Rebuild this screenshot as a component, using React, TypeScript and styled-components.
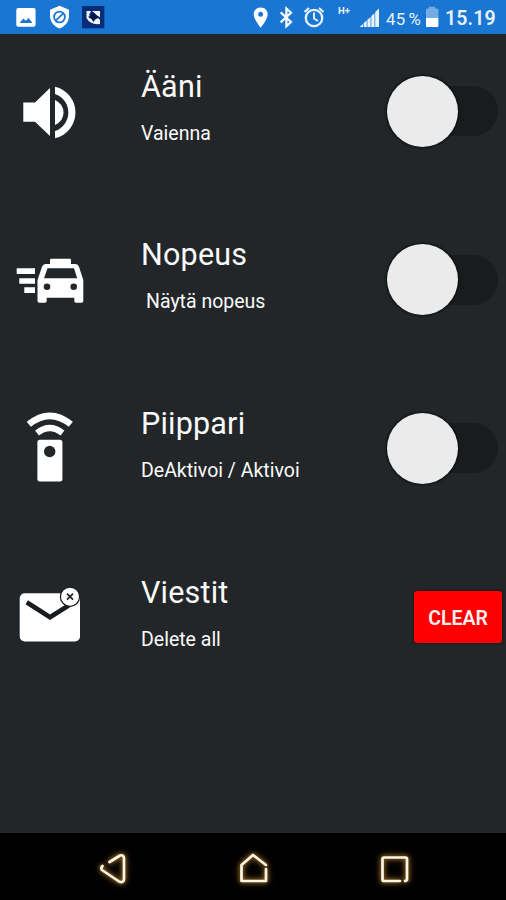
import React from "react";
import styled, { createGlobalStyle } from "styled-components";

const Global = createGlobalStyle`
  * { box-sizing: border-box; }
  html, body { margin: 0; background: #222628; }
  body { font-family: Roboto, "Noto Sans", sans-serif; color: #fafafa; }
  svg { display: block; flex: none; }
`;

const Screen = styled.div`
  width: 506px;
  height: 900px;
  display: flex;
  flex-direction: column;
  overflow: hidden;
  background: #222628;
`;

const StatusBar = styled.header`
  height: 34px;
  flex: none;
  display: flex;
  justify-content: space-between;
  background: #1976d2;
  color: #e8f2fc;
`;

const StatusGroup = styled.div`
  display: flex;
  align-items: center;
`;

const Percent = styled.span`
  width: 39px;
  padding-top: 3px;
  font-size: 16.8px;
  letter-spacing: 0.3px;
  white-space: nowrap;
  word-spacing: -1.5px;
`;

const Clock = styled.span`
  width: 61px;
  padding-top: 2px;
  font-size: 19.5px;
  font-weight: 600;
  letter-spacing: 0.15px;
`;

const Settings = styled.main`
  flex: 1;
  display: flex;
  flex-direction: column;
  gap: 14.7px;
`;

const Row = styled.section`
  height: 154px;
  display: grid;
  grid-template-columns: 141px 1fr auto;
  align-items: center;
`;

const Labels = styled.div<{ $indent?: number }>`
  display: flex;
  flex-direction: column;
  gap: 17px;
  padding-bottom: 8px;
  p { padding-left: ${(p) => p.$indent ?? 0}px; }
`;

const Title = styled.h2`
  margin: 0;
  font-size: 30.5px;
  line-height: 36px;
  font-weight: 400;
  letter-spacing: 0.2px;
`;

const Subtitle = styled.p`
  margin: 0;
  font-size: 19.5px;
  line-height: 24px;
  white-space: pre;
`;

const Switch = styled.button`
  width: 112px;
  height: 72px;
  margin-right: 7px;
  padding: 0;
  border: 0;
  display: flex;
  align-items: center;
  background: none;
`;

const Track = styled.span`
  width: 76px;
  height: 50px;
  margin-left: -36px;
  border-radius: 0 25px 25px 0;
  background: #1a1b1c;
`;

const Knob = styled.span`
  width: 71px;
  height: 71px;
  flex: none;
  z-index: 1;
  border-radius: 50%;
  background: #ebebeb;
  box-shadow: 0 0 2px 1px #0c0e0f;
`;

const ClearButton = styled.button`
  width: 88px;
  height: 52px;
  margin-right: 4px;
  padding: 3px 0 0;
  border: 0;
  border-radius: 3px;
  background: #fe0000;
  color: #fff0f0;
  font: 600 19.5px Roboto, sans-serif;
  box-shadow: 0 0 2px 1px #181c1e;
`;

const NavBar = styled.footer`
  height: 67px;
  flex: none;
  display: flex;
  justify-content: center;
  align-items: center;
  gap: 91px;
  padding: 3px 0 0 2px;
  background: #000;
  svg {
    filter: drop-shadow(0 0 2px #a87c38) drop-shadow(0 0 3px #5c3f12);
  }
`;

const SoundIcon = () => (
  <svg width="100" height="100" fill="#fff">
    <path d="M23.3 41.5H35L50 27V75L35 60.8H23.3Z" />
    <path d="M55 39Q63.5 43 63.5 51.5T55 64Z" />
    <path d="M55 25.7A26.5 26.5 0 0 1 55 77.3V70A19.5 19.5 0 0 0 55 33Z" />
  </svg>
);

const CarIcon = () => (
  <svg width="100" height="100" fill="#fff">
    <path d="M16.7 38.3H35V44H16.7ZM19.3 48.2H35V53.7H19.3ZM24.3 57.3H35V63H24.3Z" />
    <path
      fillRule="evenodd"
      d="M50 34V30Q50 28.8 51.2 28.8H69.8Q71 28.8 71 30V34H75.5Q78 34 79 36.8L83.3 50V71Q83.3 72.7 81.6 72.7H76Q74.3 72.7 74.3 71V67.7H46.7V71Q46.7 72.7 45 72.7H39.2Q37.5 72.7 37.5 71V50L42 36.8Q43 34 45.5 34ZM47.5 38.2L44 48.3H77.2L74 38.2Z"
    />
    <g fill="#222628">
      <circle cx="47" cy="56.7" r="3.3" />
      <circle cx="73.7" cy="56.7" r="3.3" />
    </g>
  </svg>
);

const RemoteIcon = () => (
  <svg width="100" height="100" fill="none" stroke="#fff">
    <path d="M28.8 26.3Q49.8 9.3 70.8 26.3" strokeWidth="6.6" />
    <path d="M37 35Q49.8 25 62.5 35" strokeWidth="6.2" />
    <rect x="37.4" y="41.7" width="25" height="41.7" rx="2.5" fill="#fff" stroke="none" />
    <circle cx="49.7" cy="53.5" r="5.7" fill="#222628" stroke="none" />
  </svg>
);

const MailIcon = () => (
  <svg width="100" height="100" fill="none">
    <rect x="19.7" y="26.2" width="60.3" height="48.2" rx="5" fill="#fff" />
    <path d="M26.7 35.3L50 50.2L69 38.3" stroke="#181c1e" strokeWidth="4.7" />
    <circle cx="70" cy="29.7" r="9.6" fill="#fff" stroke="#181c1e" strokeWidth="1.2" />
    <path d="M67 26.7L73 32.7M73 26.7L67 32.7" stroke="#222628" strokeWidth="1.7" />
  </svg>
);

const NotificationIcons = () => (
  <svg width="130" height="34">
    <rect x="16.3" y="8" width="19.3" height="18.8" rx="2" fill="#fff" />
    <path d="M19.5 23L23.5 18.5L25.7 20.8L28.5 18L32.5 23Z" fill="#1976d2" />
    <path d="M59.5 5.8L69 9.7V17Q68 25.2 59.5 28.5Q51 25.2 50 17V9.7Z" fill="#fff" />
    <g fill="none" stroke="#1976d2" strokeWidth="1.8">
      <circle cx="59.5" cy="17" r="5.4" />
      <path d="M55.5 20.8L63.5 13.2" />
    </g>
    <rect x="82" y="6" width="22.3" height="22.3" fill="#082c77" />
    <path d="M86.5 11H91L89 15L94 20L98 18L100 20V24Q90 25 86.5 18Z" fill="#eef5ff" />
    <path d="M92 11H100V17.5L97 15.5L94.5 13Z" fill="#eef5ff" />
    <path d="M93.5 12L95.5 15L99.5 17L95.5 19L93.5 22L91.5 19L88 17L91.5 15Z" fill="#061447" />
  </svg>
);

const SystemIcons = () => (
  <svg width="137" height="34" viewBox="249 0 137 34">
    <path fillRule="evenodd" d="M260.7 7.4C256.7 7.4 253.7 10.3 253.7 14.2C253.7 19.3 260.7 27.7 260.7 27.7S267.7 19.3 267.7 14.2C267.7 10.3 264.7 7.4 260.7 7.4ZM260.7 11.8A2.5 2.5 0 1 1 260.7 16.8A2.5 2.5 0 0 1 260.7 11.8Z" fill="#fff" />
    <path d="M280.7 12.4L291 22L286.4 26.3V8.5L291 12.8L280.7 22.4" fill="none" stroke="#fff" strokeWidth="2.2" />
    <g fill="none" stroke="#e8f2fc">
      <circle cx="314" cy="18" r="8.2" strokeWidth="2.3" />
      <path d="M314 12.5V18.5L318 21" strokeWidth="1.9" />
      <path d="M304.5 12L309 8M323.5 12L319 8" strokeWidth="2.2" />
    </g>
    <text x="338" y="13.5" fontSize="9.5" fontWeight="700" fill="#e8f2fc">H+</text>
    <path d="M359.5 27L363 24V27ZM363.7 23L366.7 20.5V27H363.7ZM367.4 19.7L370.6 17V27H367.4ZM371.3 16L374.5 13.3V27H371.3ZM375.2 12L379 8.5V27H375.2Z" fill="#e8f2fc" />
  </svg>
);

const BatteryIcon = () => (
  <svg width="20" height="34" viewBox="425 0 20 34">
    <path d="M426 18V9.5Q426 8.5 427 8.5H428.8V6.8H435.2V8.5H437Q438.4 8.5 438.4 9.5V18Z" fill="#75ace4" />
    <path d="M426 18H438.4V26Q438.4 27 437.4 27H427Q426 27 426 26Z" fill="#fff" />
  </svg>
);

const NavIcon = ({ d }: { d: string }) => (
  <svg width="50" height="50" fill="none" stroke="#fff5e3" strokeWidth="2.7" strokeLinecap="round" strokeLinejoin="round">
    <path d={d} />
  </svg>
);

const rows = [
  { title: "Ääni", text: "Vaienna", Icon: SoundIcon },
  { title: "Nopeus", text: "Näytä nopeus", Icon: CarIcon, indent: 5 },
  { title: "Piippari", text: "DeAktivoi / Aktivoi", Icon: RemoteIcon },
  { title: "Viestit", text: "Delete all", Icon: MailIcon, clear: true },
];

export default function App() {
  return (
    <>
      <Global />
      <Screen>
        <StatusBar>
          <StatusGroup><NotificationIcons /></StatusGroup>
          <StatusGroup>
            <SystemIcons />
            <Percent>45 %</Percent>
            <BatteryIcon />
            <Clock>15.19</Clock>
          </StatusGroup>
        </StatusBar>
        <Settings>
          {rows.map(({ title, text, Icon, indent, clear }) => (
            <Row key={title}>
              <Icon />
              <Labels $indent={indent}>
                <Title>{title}</Title>
                <Subtitle>{text}</Subtitle>
              </Labels>
              {clear ? (
                <ClearButton>CLEAR</ClearButton>
              ) : (
                <Switch role="switch" aria-checked={false} aria-label={title}>
                  <Knob />
                  <Track />
                </Switch>
              )}
            </Row>
          ))}
        </Settings>
        <NavBar>
          <NavIcon d="M21.5 19L32 12.5Q35.5 11.5 36 15V36Q35.5 40.5 31 38.5L14 27Q12.5 25 14.5 23" />
          <NavIcon d="M37 22L24 12L12.5 22V38H37V26" />
          <NavIcon d="M30 38H14Q12.5 38 12.5 36.5V16Q12.5 14.5 14 14.5H35.5Q37 14.5 37 16V37L35 38" />
        </NavBar>
      </Screen>
    </>
  );
}
